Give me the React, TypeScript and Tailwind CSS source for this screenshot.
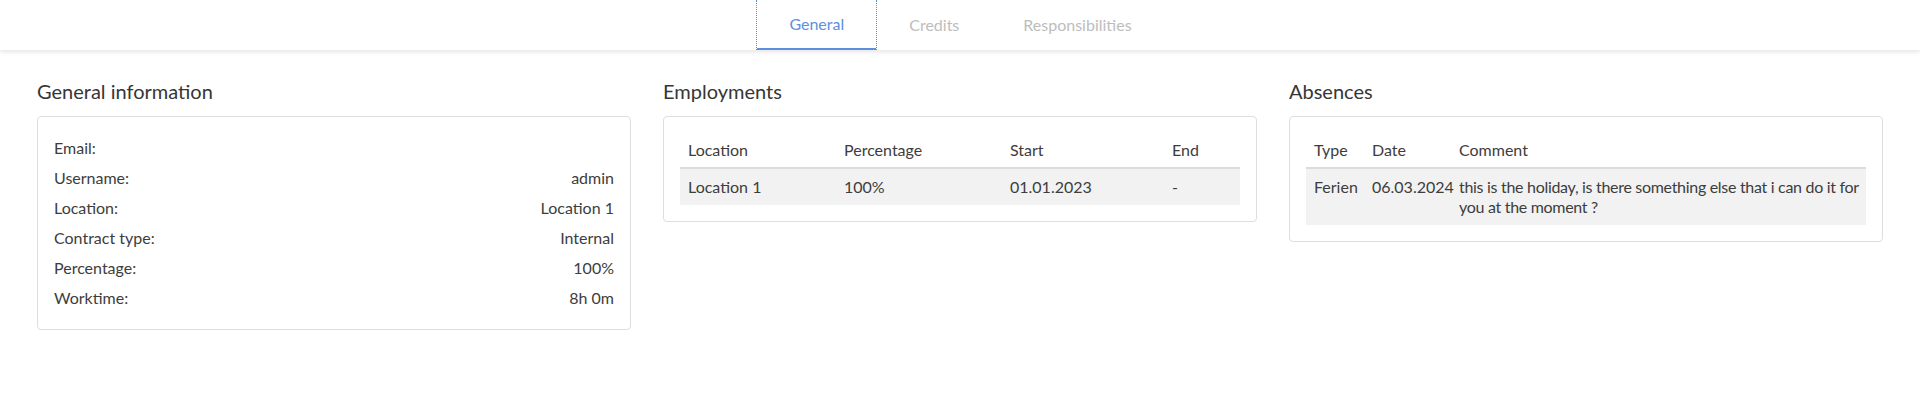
import React from "react";

const tabs = ["General", "Credits", "Responsibilities"];

const generalInfo: [string, string][] = [
  ["Email:", ""],
  ["Username:", "admin"],
  ["Location:", "Location 1"],
  ["Contract type:", "Internal"],
  ["Percentage:", "100%"],
  ["Worktime:", "8h 0m"],
];

function Card({ title, children }: { title: string; children: React.ReactNode }) {
  return (
    <div>
      <h2 className="text-[20px] leading-[25px] text-[#363636] mb-3">{title}</h2>
      <div className="border border-[#dedede] rounded-[4px] p-4 bg-white">{children}</div>
    </div>
  );
}

export default function App() {
  return (
    <div className="min-h-[406px] bg-white text-[#3d3d3d] text-[16px]" style={{ fontFamily: "Lato, 'Noto Sans', sans-serif" }}>
      {/* tabs bar */}
      <div className="h-[50px] bg-white shadow-[0_2px_4px_rgba(0,0,0,0.10)] flex justify-center">
        {tabs.map((t, i) => (
          <div
            key={t}
            className={
              i === 0
                ? "h-[50px] px-8 flex items-center text-[#5c8fe0] border-b-2 border-[#5c8fe0] border-l border-r border-l-[#5c8fe0] border-r-[#5c8fe0] border-dotted"
                : "h-[50px] px-8 flex items-center text-[#bdbdbd]"
            }
            style={i === 0 ? { borderBottomStyle: "solid" } : undefined}
          >
            {t}
          </div>
        ))}
      </div>

      <div className="grid grid-cols-3 gap-8 px-[37px] pt-[29px]">
        <Card title="General information">
          {generalInfo.map(([k, v]) => (
            <div key={k} className="h-[30px] flex items-center justify-between">
              <span>{k}</span>
              <span>{v}</span>
            </div>
          ))}
        </Card>

        <Card title="Employments">
          <table className="w-full table-fixed border-collapse leading-5 text-left">
            <colgroup>
              <col className="w-[156px]" />
              <col className="w-[166px]" />
              <col className="w-[162px]" />
              <col />
            </colgroup>
            <thead>
              <tr className="border-b-2 border-[#dbdbdb]">
                <th className="font-normal px-2 py-[7px]">Location</th>
                <th className="font-normal px-2 py-[7px]">Percentage</th>
                <th className="font-normal px-2 py-[7px]">Start</th>
                <th className="font-normal px-2 py-[7px]">End</th>
              </tr>
            </thead>
            <tbody>
              <tr className="bg-[#f2f2f2]">
                <td className="px-2 py-2">Location 1</td>
                <td className="px-2 py-2">100%</td>
                <td className="px-2 py-2">01.01.2023</td>
                <td className="px-2 py-2">-</td>
              </tr>
            </tbody>
          </table>
        </Card>

        <Card title="Absences">
          <table className="w-full table-fixed border-collapse leading-5 text-left">
            <colgroup>
              <col className="w-[58px]" />
              <col className="w-[87px]" />
              <col />
            </colgroup>
            <thead>
              <tr className="border-b-2 border-[#dbdbdb]">
                <th className="font-normal px-2 py-[7px]">Type</th>
                <th className="font-normal px-2 py-[7px]">Date</th>
                <th className="font-normal px-2 py-[7px]">Comment</th>
              </tr>
            </thead>
            <tbody>
              <tr className="bg-[#f2f2f2] align-top">
                <td className="px-2 py-2">Ferien</td>
                <td className="px-2 py-2">06.03.2024</td>
                <td className="pl-2 pr-0 py-2 tracking-[-0.3px]">this is the holiday, is there something else that i can do it for you at the moment ?</td>
              </tr>
            </tbody>
          </table>
        </Card>
      </div>
    </div>
  );
}
